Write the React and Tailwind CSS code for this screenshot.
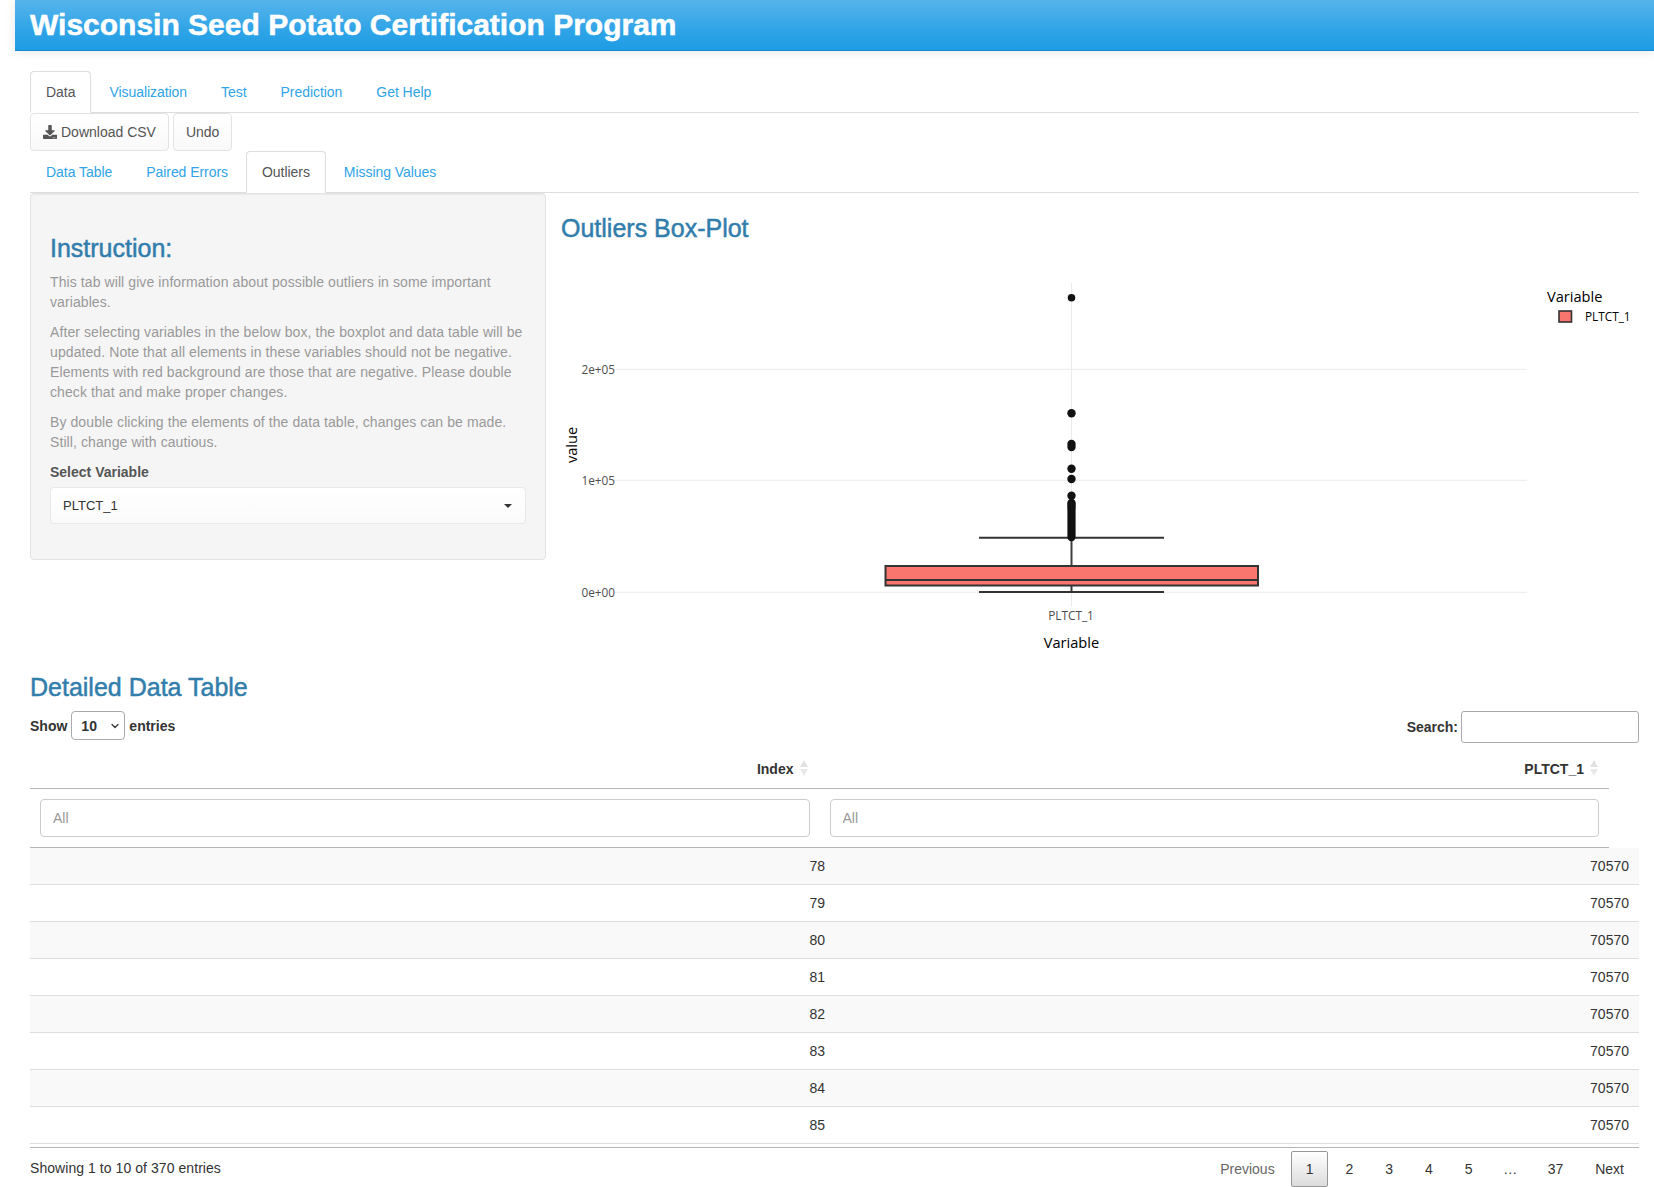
import { FaDownload } from 'react-icons/fa'
import { ChevronDown } from 'lucide-react'

const MAIN_TABS = ['Data', 'Visualization', 'Test', 'Prediction', 'Get Help']
const SUB_TABS = ['Data Table', 'Paired Errors', 'Outliers', 'Missing Values']
const ROWS = [78, 79, 80, 81, 82, 83, 84, 85]
const PAGES = ['2', '3', '4', '5']

// outlier y positions, in page pixels
const OUTLIERS = [413.3, 444, 447, 468.7, 479, 495.7, 503, 505, 507.3]
for (let y = 510; y <= 538; y += 3) OUTLIERS.push(y)

function Tabs({ items, active }) {
  return (
    <ul className="flex border-b border-[#ddd] h-[42px] tracking-[-0.05px]">
      {items.map(label => (
        <li key={label} className="mr-[2px] h-[42px]">
          <a className={label === active
            ? 'block h-[42px] px-[15px] py-[10px] rounded-t-[4px] border border-[#ddd] border-b-white bg-white text-[#555]'
            : 'block h-[42px] px-[15px] py-[10px] border border-transparent text-[#2fa4e7]'}>
            {label}
          </a>
        </li>
      ))}
    </ul>
  )
}

function Btn({ children }) {
  return (
    <button className="flex items-center h-[38px] px-[12px] rounded-[4px] border border-[#e3e3e3] bg-gradient-to-b from-white to-[#f9f9f9] text-[#555] text-sm">
      {children}
    </button>
  )
}

function SortArrows() {
  return (
    <svg width="10" height="18" viewBox="0 0 10 18" className="shrink-0">
      <path d="M5 1 L9 8 L1 8 Z" fill="#e2e2e2" />
      <path d="M5 17 L9 10 L1 10 Z" fill="#e9e9e9" />
    </svg>
  )
}

function BoxPlot() {
  const axis = 'Open Sans, sans-serif'
  return (
    <svg viewBox="561 262 1079 400" className="block w-[1079px] h-[400px] mt-[21px]">
      {[369.3, 480.3, 592.3].map(y => (
        <line key={y} x1="615" x2="1527" y1={y} y2={y} stroke="#ebebeb" strokeWidth="1" />
      ))}
      <line x1="1071.5" x2="1071.5" y1="283" y2="607" stroke="#ebebeb" strokeWidth="1" />

      {[['2e+05', 369.3], ['1e+05', 480.3], ['0e+00', 592.3]].map(([t, y]) => (
        <text key={t} x="615" y={y + 4.3} textAnchor="end" fontSize="11.8" fill="#4d4d4d" fontFamily={axis}>{t}</text>
      ))}
      <text transform="translate(577 445) rotate(-90)" textAnchor="middle" fontSize="14.6" fill="#000" fontFamily={axis}>value</text>
      <text x="1071" y="619.5" textAnchor="middle" fontSize="11.8" fill="#4d4d4d" fontFamily={axis}>PLTCT_1</text>
      <text x="1071.5" y="647.5" textAnchor="middle" fontSize="14.6" fill="#000" fontFamily={axis}>Variable</text>

      {/* whiskers */}
      <line x1="1071.5" x2="1071.5" y1="538" y2="592" stroke="#3f3f3f" strokeWidth="2" />
      <line x1="979" x2="1164" y1="537.7" y2="537.7" stroke="#333" strokeWidth="2" />
      <line x1="979" x2="1164" y1="592" y2="592" stroke="#333" strokeWidth="2" />

      {/* box */}
      <rect x="885.5" y="566" width="372.5" height="19.5" fill="#f8766d" stroke="#333" strokeWidth="2" />
      <line x1="885" x2="1258" y1="580" y2="580" stroke="#333" strokeWidth="2" />

      {/* outliers */}
      <circle cx="1071.5" cy="297.7" r="3.8" fill="#111" />
      {OUTLIERS.map(y => (
        <circle key={y} cx="1071.5" cy={y} r="4.2" fill="#111" />
      ))}

      {/* legend */}
      <text x="1547" y="301.5" fontSize="14.6" fill="#000" fontFamily={axis}>Variable</text>
      <rect x="1559" y="311" width="12.5" height="11" fill="#f8766d" stroke="#333" strokeWidth="1.6" />
      <text x="1585" y="320.5" fontSize="11.8" fill="#000" fontFamily={axis}>PLTCT_1</text>
    </svg>
  )
}

export default function App() {
  return (
    <div className="h-[1187px] overflow-hidden bg-white text-sm leading-[20px] text-[#555] font-['Liberation_Sans',Arial,sans-serif]">
      <header className="ml-[15px] h-[51px] pl-[15px] border-b border-[#178acc] bg-gradient-to-b from-[#54b4eb] via-[#2fa4e7] via-60% to-[#1d9ce5] shadow-[0_1px_10px_rgba(0,0,0,0.1)]">
        <h1 className="text-[30px] leading-[50px] font-bold text-white [-webkit-text-stroke:0.5px_white]">Wisconsin Seed Potato Certification Program</h1>
      </header>

      <main className="pl-[30px] pr-[15px] pt-[20px]">
        <Tabs items={MAIN_TABS} active="Data" />

        <div className="flex gap-[4px]">
          <Btn><FaDownload className="w-[14px] h-[14px] mr-[4px] text-[#555]" />Download CSV</Btn>
          <Btn>Undo</Btn>
        </div>

        <Tabs items={SUB_TABS} active="Outliers" />

        <div className="flex">
          <aside className="w-[516px] h-[367px] shrink-0 px-[19px] pt-[21px] border border-[#e3e3e3] rounded-[4px] bg-[#f5f5f5] shadow-[inset_0_1px_1px_rgba(0,0,0,0.05)]">
            <h3 className="mt-[20px] mb-[11px] text-[25px] leading-[26.4px] font-normal text-[#317eac] [-webkit-text-stroke:0.5px_#317eac]">Instruction:</h3>
            <div className="text-[#999] tracking-[0.09px]">
              <p className="mb-[10px]">This tab will give information about possible outliers in some important variables.</p>
              <p className="mb-[10px]">After selecting variables in the below box, the boxplot and data table will be updated. Note that all elements in these variables should not be negative. Elements with red background are those that are negative. Please double check that and make proper changes.</p>
              <p className="mb-[10px]">By double clicking the elements of the data table, changes can be made. Still, change with cautious.</p>
            </div>
            <label className="block mb-[5px] font-bold text-[#555]">Select Variable</label>
            <div className="flex items-center justify-between h-[37px] pl-[12px] pr-[13px] rounded-[4px] border border-[#e9e9e9] bg-gradient-to-b from-white to-[#fafafa] text-[13px] text-[#333]">
              <span>PLTCT_1</span>
              <span className="border-x-[4px] border-t-[4px] border-x-transparent border-t-[#333]" />
            </div>
          </aside>

          <section className="ml-[15px] min-w-0">
            <h3 className="mt-[22px] text-[25px] leading-[26.4px] font-normal text-[#317eac] [-webkit-text-stroke:0.5px_#317eac]">Outliers Box-Plot</h3>
            <BoxPlot />
          </section>
        </div>

        <h3 className="mt-[12px] text-[25px] leading-[26.4px] font-normal text-[#317eac] [-webkit-text-stroke:0.5px_#317eac]">Detailed Data Table</h3>

        <div className="flex items-start justify-between mt-[11px] h-[45px] font-bold text-[#333]">
          <div className="flex items-center h-[28px]">
            Show
            <div className="flex items-center justify-between w-[54px] h-[29px] mx-[4px] pl-[9px] pr-[3px] rounded-[4px] border border-[#aaa] text-[#333]">
              10 <ChevronDown className="w-[12px] h-[12px]" strokeWidth={2.5} />
            </div>
            entries
          </div>
          <label className="flex items-center h-[32px] -mt-[1px]">
            Search:
            <input className="w-[178px] h-[32px] ml-[3px] rounded-[3px] border border-[#aaa] bg-white" />
          </label>
        </div>

        {/* fixed header */}
        <div className="w-[1579px]">
          <div className="grid grid-cols-2 h-[32px] pt-[2px] border-b border-[#b5b5b5] font-bold text-[#333]">
            <div className="flex items-start justify-end gap-[5px] pr-[11px]">Index <SortArrows /></div>
            <div className="flex items-start justify-end gap-[5px] pr-[10px]">PLTCT_1 <SortArrows /></div>
          </div>
          <div className="grid grid-cols-2 h-[59px] border-b border-[#b5b5b5]">
            {[0, 1].map(i => (
              <div key={i} className="px-[10px] pt-[10px]">
                <input placeholder="All" className="block w-full h-[38px] px-[12px] rounded-[4px] border border-[#ccc] bg-white placeholder:text-[#999]" />
              </div>
            ))}
          </div>
        </div>

        <table className="w-full text-[#333] border-b border-[#b5b5b5] border-separate border-spacing-0">
          <tbody>
            {ROWS.map((n, i) => (
              <tr key={n} className={i % 2 === 0 ? 'bg-[#f9f9f9]' : 'bg-white'}>
                <td className="w-[805px] h-[37px] px-[10px] text-right border-b border-[#ddd]">{n}</td>
                <td className="h-[37px] px-[10px] text-right border-b border-[#ddd]">70570</td>
              </tr>
            ))}
            <tr><td colSpan="2" className="h-[3px]" /></tr>
          </tbody>
        </table>

        <div className="flex items-start justify-between mt-[3px]">
          <div className="pt-[7px] text-[#333] tracking-[0.06px]">Showing 1 to 10 of 370 entries</div>
          <div className="flex items-center text-[#333]">
            <span className="pl-[14px] pr-[13px] py-[7px] text-[#666] border border-transparent">Previous</span>
            <span className="px-[14px] py-[7px] ml-[2px] border border-[#979797] rounded-[2px] bg-gradient-to-b from-white to-[#dcdcdc]">1</span>
            {PAGES.map(p => (
              <span key={p} className="px-[14px] py-[7px] ml-[2px] border border-transparent">{p}</span>
            ))}
            <span className="px-[13.5px] py-[7px] ml-[2px]">…</span>
            <span className="px-[14px] py-[7px] ml-[2px] border border-transparent">37</span>
            <span className="px-[14px] py-[7px] ml-[2px] border border-transparent">Next</span>
          </div>
        </div>
      </main>
    </div>
  )
}
